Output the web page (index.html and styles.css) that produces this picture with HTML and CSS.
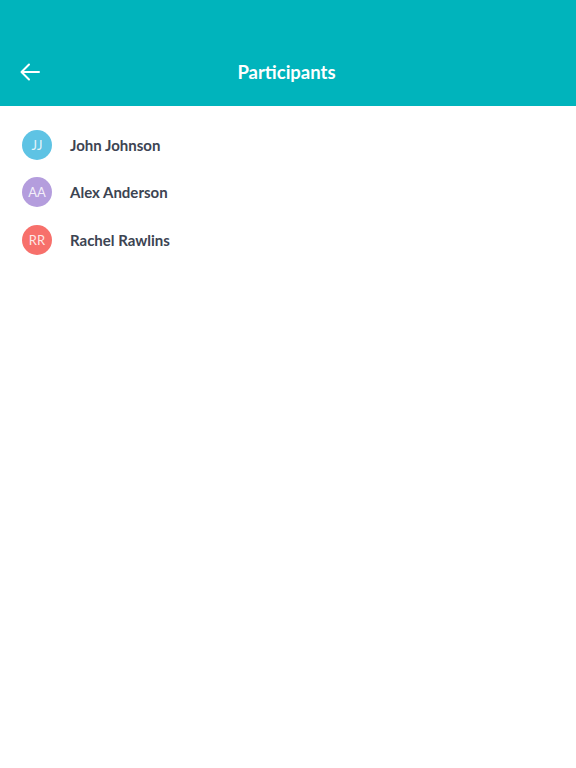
FILE: index.html
```html
<!DOCTYPE html>
<html lang="en">
<head>
    <meta charset="UTF-8">
    <meta name="viewport" content="width=device-width, initial-scale=1.0">
    <title>Participants</title>
    <link rel="stylesheet" href="styles.css">
</head>
<body>
    <div class="header">
        <div class="bar">
            <span class="back">
                <svg width="20" height="18" viewBox="0 0 20 18"><path d="M19 9H2M9 1.5L1.5 9L9 16.5" fill="none" stroke="#fff" stroke-width="2" stroke-linecap="round" stroke-linejoin="round"/></svg>
            </span>
            <div class="title">Participants</div>
        </div>
    </div>
    <div class="list">
        <div class="row"><span class="avatar blue">JJ</span><span class="name">John Johnson</span></div>
        <div class="row"><span class="avatar purple">AA</span><span class="name">Alex Anderson</span></div>
        <div class="row"><span class="avatar red">RR</span><span class="name">Rachel Rawlins</span></div>
    </div>
</body>
</html>
```

FILE: styles.css
```css
body{
    margin: 0;
    font-family: Lato, "Open Sans", sans-serif;
    background-color: white;
}
.header{
    background-color: #00b4bc;
    height: 106px;
    padding-top: 50px;
    box-sizing: border-box;
}
.bar{
    height: 44px;
    display: flex;
    align-items: center;
    justify-content: center;
    position: relative;
}
.back{
    position: absolute;
    left: 20px;
    top: 13px;
    display: flex;
}
.title{
    color: white;
    font-size: 18.5px;
    font-weight: bold;
    padding-right: 3px;
}
.list{
    padding-top: 15px;
}
.row{
    height: 47.5px;
    display: flex;
    align-items: center;
    padding-left: 22px;
}
.avatar{
    width: 30px;
    height: 30px;
    border-radius: 50%;
    color: rgba(255,255,255,0.85);
    font-size: 13px;
    display: flex;
    align-items: center;
    justify-content: center;
    margin-right: 18px;
}
.blue{ background-color: #5ec3e4; }
.purple{ background-color: #b49ddd; }
.red{ background-color: #f7706b; }
.name{
    font-size: 15px;
    font-weight: bold;
    color: #3c4452;
}
```
